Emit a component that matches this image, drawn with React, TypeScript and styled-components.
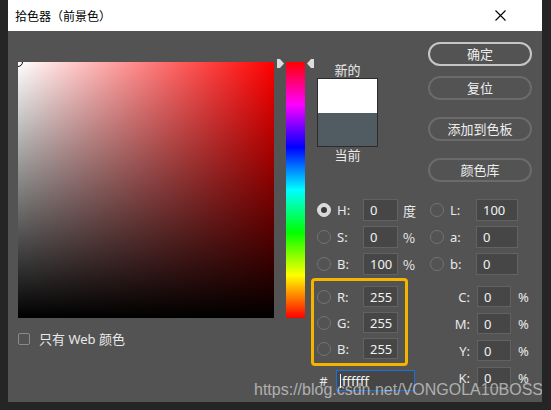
import React from 'react';
import styled, { createGlobalStyle } from 'styled-components';

const GlobalStyle = createGlobalStyle`
  html, body {
    margin: 0;
    padding: 0;
    background: #252525;
  }
  body {
    font-family: "Noto Sans", "Noto Sans CJK SC", sans-serif;
  }
`;

const Dialog = styled.div`
  position: relative;
  margin-left: 8px;
  width: 534px;
  height: 402px;
  display: flex;
  flex-direction: column;
  overflow: hidden;
`;

const TitleBar = styled.div`
  height: 31px;
  flex-shrink: 0;
  background: #ffffff;
  display: flex;
  align-items: center;
  justify-content: space-between;
  padding: 0 36px 0 7px;
  font-family: "Noto Sans CJK SC", sans-serif;
  font-size: 12px;
  color: #000;
`;

const Body = styled.div`
  flex: 1;
  background: #535353;
  display: flex;
  padding-left: 10px;
  color: #e9e9e9;
  font-size: 13px;
`;

const LeftCol = styled.div`
  padding-top: 31px;
  display: flex;
  flex-direction: column;
`;

const PickRow = styled.div`
  display: flex;
  gap: 12px;
`;

const Field = styled.div`
  position: relative;
  width: 256px;
  height: 256px;
  overflow: hidden;
  background: linear-gradient(to top, #000 0%, rgba(0, 0, 0, 0) 100%),
    linear-gradient(to right, #fff 0%, #f00 100%);
`;

const Marker = styled.div`
  position: absolute;
  left: -5px;
  top: -5px;
  width: 10px;
  height: 10px;
  box-sizing: border-box;
  border-radius: 50%;
  border: 1.5px solid #000;
`;

const HueWrap = styled.div`
  position: relative;
`;

const Hue = styled.div`
  width: 19px;
  height: 256px;
  background: linear-gradient(to bottom, #f00 0%, #f0f 16.6%, #00f 33.3%, #0ff 50%, #0f0 66.6%, #ff0 83.3%, #f00 100%);
`;

const Arrow = styled.svg<{ $side: 'left' | 'right' }>`
  position: absolute;
  top: -3px;
  left: ${(p) => (p.$side === 'left' ? '-9px' : '21px')};
  width: 7px;
  height: 9px;
`;

const CheckRow = styled.div`
  margin-top: 14px;
  display: flex;
  align-items: center;
  gap: 9px;
  line-height: 14px;
`;

const CheckBox = styled.div`
  width: 12px;
  height: 12px;
  box-sizing: border-box;
  border: 1.5px solid #8a8a8a;
  border-radius: 2px;
`;

const RightCol = styled.div`
  margin-left: 6px;
  width: 231px;
  padding-top: 11px;
  display: flex;
  flex-direction: column;
`;

const TopArea = styled.div`
  display: flex;
  align-items: flex-start;
`;

const Preview = styled.div`
  margin-left: 6px;
  margin-top: 20px;
  width: 61px;
  display: flex;
  flex-direction: column;
  align-items: center;
`;

const PreviewLabel = styled.div`
  line-height: 16px;
  font-family: "Noto Sans CJK SC", sans-serif;
`;

const Swatch = styled.div`
  width: 61px;
  height: 69px;
  box-sizing: border-box;
  border: 1px solid #2c2c2c;
  display: flex;
  flex-direction: column;
`;

const SwatchHalf = styled.div<{ $color: string }>`
  flex: 1;
  background: ${(p) => p.$color};
`;

const Buttons = styled.div`
  margin-left: 50px;
  width: 104px;
  display: flex;
  flex-direction: column;
`;

const Button = styled.button<{ $primary?: boolean; $gap: number }>`
  margin-top: ${(p) => p.$gap}px;
  height: 24px;
  border-radius: 12px;
  border: 2px solid ${(p) => (p.$primary ? '#c6c6c6' : '#6b6b6b')};
  background: transparent;
  color: #eeeeee;
  font-family: "Noto Sans CJK SC", sans-serif;
  font-size: 13px;
  line-height: 18px;
  padding: 0;
`;

const ModelRows = styled.div`
  margin-top: 17px;
  margin-left: 6px;
  display: flex;
  flex-direction: column;
  gap: 5px;
`;

const Row = styled.div<{ $h: number }>`
  height: ${(p) => p.$h}px;
  display: flex;
  align-items: center;
`;

const Radio = styled.div<{ $on?: boolean }>`
  width: 14px;
  height: 14px;
  flex-shrink: 0;
  box-sizing: border-box;
  border-radius: 50%;
  border: 1px solid ${(p) => (p.$on ? '#dadada' : '#737373')};
  background: ${(p) => (p.$on ? '#dadada' : 'transparent')};
  display: flex;
  align-items: center;
  justify-content: center;
  &::after {
    content: '';
    display: ${(p) => (p.$on ? 'block' : 'none')};
    width: 6px;
    height: 6px;
    border-radius: 50%;
    background: #3a3a3a;
  }
`;

const Label = styled.div`
  width: 32px;
  padding-left: 6px;
  box-sizing: border-box;
`;

const Input = styled.div<{ $w: number; $h: number }>`
  width: ${(p) => p.$w}px;
  height: ${(p) => p.$h}px;
  box-sizing: border-box;
  flex-shrink: 0;
  background: #464646;
  border: 1px solid #626262;
  padding-left: 6px;
  display: flex;
  align-items: center;
  color: #f2f2f2;
`;

const Unit = styled.div`
  width: 32px;
  padding-left: 5px;
  box-sizing: border-box;
  font-family: "Noto Sans CJK SC", sans-serif;
`;

const BottomArea = styled.div`
  margin-top: 3px;
  display: flex;
  align-items: flex-start;
`;

const LeftBottom = styled.div`
  width: 97px;
  flex-shrink: 0;
  display: flex;
  flex-direction: column;
`;

const RgbBox = styled.div`
  width: 97px;
  box-sizing: border-box;
  border: 3px solid #f5b400;
  border-radius: 4px;
  padding: 5px 7px 4px 3px;
  display: flex;
  flex-direction: column;
  gap: 5px;
`;

const HexRow = styled.div`
  margin-top: 4px;
  height: 21px;
  display: flex;
  align-items: center;
`;

const Hash = styled.div`
  width: 25px;
  flex-shrink: 0;
  text-align: center;
`;

const HexInput = styled.div`
  width: 79px;
  height: 21px;
  flex-shrink: 0;
  box-sizing: border-box;
  background: #464646;
  border: 1px solid #1f6fd6;
  padding-left: 3px;
  display: flex;
  align-items: center;
  color: #f4f4f4;
`;

const Caret = styled.span`
  width: 1px;
  height: 14px;
  background: #f4f4f4;
  margin-right: 1px;
`;

const CmykCol = styled.div`
  margin-top: 8px;
  display: flex;
  flex-direction: column;
  gap: 6px;
`;

const CmykLabel = styled.div`
  width: 62px;
  text-align: right;
  margin-right: 7px;
`;

const CmykUnit = styled.div`
  margin-left: 7px;
`;

const Watermark = styled.div`
  position: absolute;
  left: 246px;
  top: 381px;
  font-family: "Liberation Sans", Arial, sans-serif;
  font-size: 16px;
  line-height: 18px;
  color: rgba(255, 255, 255, 0.55);
  white-space: nowrap;
  pointer-events: none;
`;

const hsb = [
  { key: 'H', value: '0', unit: '度', other: 'L', otherValue: '100', on: true },
  { key: 'S', value: '0', unit: '%', other: 'a', otherValue: '0', on: false },
  { key: 'B', value: '100', unit: '%', other: 'b', otherValue: '0', on: false },
];

const rgb = ['R', 'G', 'B'];
const cmyk = ['C', 'M', 'Y', 'K'];

const App: React.FC = () => {
  return (
    <>
      <GlobalStyle />
      <Dialog>
        <TitleBar>
          <span>拾色器（前景色）</span>
          <svg width="11" height="11" viewBox="0 0 11 11">
            <path d="M0.5 0.5 L10.5 10.5 M10.5 0.5 L0.5 10.5" stroke="#000" strokeWidth="1.1" />
          </svg>
        </TitleBar>
        <Body>
          <LeftCol>
            <PickRow>
              <Field>
                <Marker />
              </Field>
              <HueWrap>
                <Hue />
                <Arrow $side="left" viewBox="0 0 7 9">
                  <polygon points="0,0 3,0 7,4.5 3,9 0,9" fill="#dcdcdc" />
                </Arrow>
                <Arrow $side="right" viewBox="0 0 7 9">
                  <polygon points="7,0 4,0 0,4.5 4,9 7,9" fill="#dcdcdc" />
                </Arrow>
              </HueWrap>
            </PickRow>
            <CheckRow>
              <CheckBox />
              <span>只有 Web 颜色</span>
            </CheckRow>
          </LeftCol>

          <RightCol>
            <TopArea>
              <Preview>
                <PreviewLabel>新的</PreviewLabel>
                <Swatch>
                  <SwatchHalf $color="#ffffff" />
                  <SwatchHalf $color="#505b62" />
                </Swatch>
                <PreviewLabel>当前</PreviewLabel>
              </Preview>
              <Buttons>
                <Button $primary $gap={0}>确定</Button>
                <Button $gap={10}>复位</Button>
                <Button $gap={17}>添加到色板</Button>
                <Button $gap={17}>颜色库</Button>
              </Buttons>
            </TopArea>

            <ModelRows>
              {hsb.map((r) => (
                <Row key={r.key} $h={22}>
                  <Radio $on={r.on} />
                  <Label>{r.key}:</Label>
                  <Input $w={35} $h={22}>{r.value}</Input>
                  <Unit>{r.unit}</Unit>
                  <Radio />
                  <Label>{r.other}:</Label>
                  <Input $w={42} $h={22}>{r.otherValue}</Input>
                </Row>
              ))}
            </ModelRows>

            <BottomArea>
              <LeftBottom>
                <RgbBox>
                  {rgb.map((k) => (
                    <Row key={k} $h={21}>
                      <Radio />
                      <Label>{k}:</Label>
                      <Input $w={35} $h={21}>255</Input>
                    </Row>
                  ))}
                </RgbBox>
                <HexRow>
                  <Hash>#</Hash>
                  <HexInput>
                    <Caret />
                    ffffff
                  </HexInput>
                </HexRow>
              </LeftBottom>
              <CmykCol>
                {cmyk.map((k) => (
                  <Row key={k} $h={21}>
                    <CmykLabel>{k}:</CmykLabel>
                    <Input $w={34} $h={21}>0</Input>
                    <CmykUnit>%</CmykUnit>
                  </Row>
                ))}
              </CmykCol>
            </BottomArea>
          </RightCol>
        </Body>
        <Watermark>https://blog.csdn.net/VONGOLA10BOSS</Watermark>
      </Dialog>
    </>
  );
};

export default App;
